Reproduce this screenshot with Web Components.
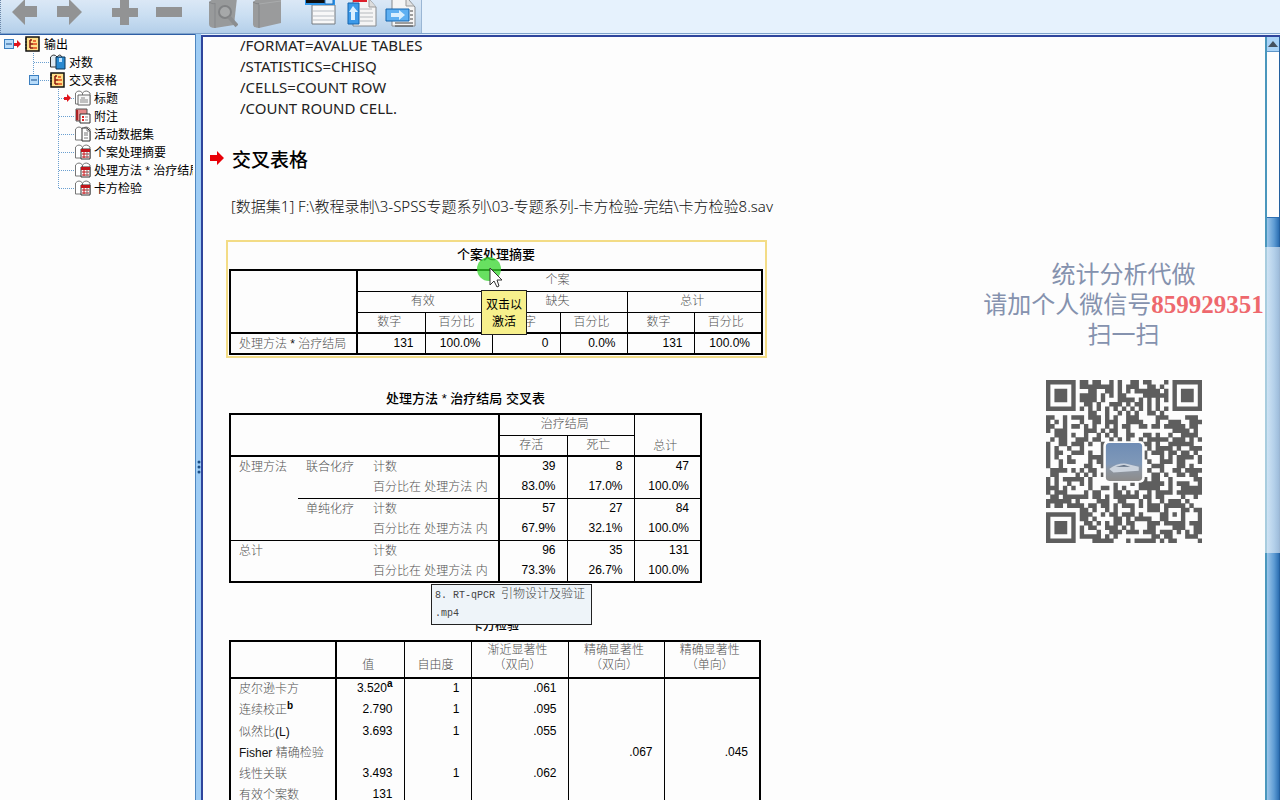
<!DOCTYPE html>
<html lang="zh-CN">
<head>
<meta charset="utf-8">
<title>输出查看器</title>
<style>
  html, body { height: 100%; margin: 0; }
  body { background: #fdfdfd; color: #000; font: 12px/18px "Liberation Sans", "Noto Sans CJK SC", sans-serif; overflow: hidden; }
</style>
</head>
<body>
<viewer-app></viewer-app>
<script>
const define = (name, html, setup) => {
  const template = document.createElement('template');
  template.innerHTML = html;
  customElements.define(name, class extends HTMLElement {
    connectedCallback() {
      if (this.shadowRoot) return;
      this.attachShadow({ mode: 'open' }).append(template.content.cloneNode(true));
      if (setup) setup.call(this, this.shadowRoot);
    }
  });
};

/* ---------- toolbar ---------- */
define('tool-button', `
<style>
  :host { display: block; }
  button { display: block; width: 32px; height: 34px; padding: 0; border: 0; background: none; }
  ::slotted(svg) { display: block; }
</style>
<button type="button"><slot></slot></button>`, function (root) {
  root.querySelector('button').setAttribute('aria-label', this.getAttribute('label'));
});

define('tool-bar', `
<style>
  :host { display: flex; background: #e6f2fd; height: 34px; box-sizing: border-box; border-bottom: 1px solid #7fa3cc; }
  .bar { display: flex; gap: 23px; padding: 0 4px 0 7px; background: linear-gradient(#dbe8f6, #cbdff2 45%, #b4cfe9); border-left: 1px dotted #6c87a8; border-right: 1px solid #9ab6d4; }
  .group { display: flex; gap: 12px; }
  .group.tight { gap: 8px; }
</style>
<div class="bar" role="toolbar">
  <div class="group">
    <tool-button label="后退"><svg width="32" height="34"><path d="M4 12 17-1V6H29V17H17V25Z" fill="#929394"/></svg></tool-button>
    <tool-button label="前进"><svg width="32" height="34"><path d="M30 12 17-1V6H5V17H17V25Z" fill="#929394"/></svg></tool-button>
  </div>
  <div class="group">
    <tool-button label="展开"><svg width="32" height="34"><path d="M13 0H22V8H31V17H22V25H13V17H5V8H13Z" fill="#929394"/></svg></tool-button>
    <tool-button label="折叠"><svg width="32" height="34"><path d="M5 7H31V17H5Z" fill="#929394"/></svg></tool-button>
  </div>
  <div class="group">
    <tool-button label="查找"><svg width="32" height="34"><path d="M3 2 8-2H31L28 25 9 28Q3 28 3 24Z" fill="#989a9b"/><path d="M3 2Q8 5 9 3V28" fill="none" stroke="#85878a"/><circle cx="19" cy="12" r="6" fill="#a6a8a9" stroke="#808284" stroke-width="2"/><path d="M23 17 31 26" stroke="#8b8d8f" stroke-width="4"/></svg></tool-button>
    <tool-button label="书籍"><svg width="32" height="34"><path d="M3 2 8-2H31V23L9 28Q3 28 3 24Z" fill="#9a9b9c"/><path d="M3 2Q8 5 9 3V28" fill="none" stroke="#838587"/><path d="M9 4 31 1" stroke="#a9abac"/></svg></tool-button>
  </div>
  <div class="group tight">
    <tool-button label="选择最后输出"><svg width="32" height="34"><path d="M7 5H30V24H7Z" fill="#f8f8f8" stroke="#747a80"/><path d="M8 11H29M8 16H29M8 20H29" stroke="#b8bec5"/><path d="M0-2H29V4H0Z" fill="#101010" stroke="#2b93e8" stroke-width="2"/><path d="M20-2H28V4H20Z" fill="#cbe7ff" stroke="#1a6fbd"/></svg></tool-button>
    <tool-button label="关联自动脚本"><svg width="32" height="34"><path d="M8-1H24L31 7V26H8Z" fill="#f5f5f5" stroke="#85898d"/><path d="M24-1V7H31" fill="#ddd" stroke="#999"/><path d="M8-1H22V2H8Z" fill="#dd202a"/><path d="M15 9H27M15 13H28M15 17H28M15 21H28" stroke="#b5b9bd"/><path d="M3 3H14V24H3Z" fill="#3d9ae9" stroke="#1464ae"/><path d="M8 6 13 12H10V20H6V12H4Z" fill="#d9efff"/></svg></tool-button>
    <tool-button label="导出"><svg width="32" height="34"><path d="M7-1H23L30 7V26H7Z" fill="#f5f5f5" stroke="#85898d"/><path d="M21-1V6H29" fill="#e2e2e2" stroke="#999"/><path d="M10 23H28M10 26H28M25 11H28M25 15H28M25 19H28" stroke="#444"/><path d="M1 9H24V21H1Z" fill="#5fb0f2" stroke="#1464ae"/><path d="M6 13H14V10L20 15 14 20V17H6Z" fill="#d9efff"/></svg></tool-button>
  </div>
</div>`);

/* ---------- outline tree ---------- */
const book = '<path d="M.5 14V3Q4-1 7.500 3 11-1 15 3V14Z" fill="#fff" stroke="#777"/><path d="M7.500 3V14" stroke="#777"/>';
const glyphs = {
  output: '<path d="M1 1H14V15H1Z" fill="#ffe08a" stroke="#111" stroke-width="1.500"/><path d="M0 3H2M0 6H2M0 9H2M0 12H2" stroke="#111"/><path d="M5 4V12M5 8H8M5 4H7M5 12H8" fill="none" stroke="#8b1a10" stroke-width="1.500"/><path d="M8 5H11M8 8H12M8 12H12" stroke="#e2481c" stroke-width="1.500"/>',
  log: '<path d="M.5 13V3Q4-1 7 3 10-1 12 3V13Z" fill="#dfeaf2" stroke="#333"/><path d="M6 3H15V15H6Z" fill="#2b8ad0" stroke="#0d3658"/><path d="M9 4H12V8H9Z" fill="#bfe4ff"/>',
  title: book + '<path d="M3 5H15V15H3Z" fill="#f8f8f8" stroke="#666"/><path d="M6 8H10M5 10H13M5 12H13" stroke="#888"/>',
  notes: '<path d="M1 1H12V13H1Z" fill="#e58a8a" stroke="#555"/><path d="M2 2V12" stroke="#a22" stroke-width="2"/><path d="M5 6H15V15H5Z" fill="#fff" stroke="#333"/><path d="M7 9H9M7 12H9" stroke="#d22" stroke-width="2"/><path d="M10 9H13M10 12H13" stroke="#888"/>',
  data: book + '<path d="M7 2H12L15 5V15H7Z" fill="#fff" stroke="#333"/><path d="M12 2V5H15M9 7H13M9 9H13M9 12H13" fill="none" stroke="#777"/>',
  table: book + '<path d="M6 5H15V15H6Z" fill="#fff" stroke="#333"/><path d="M6 5H15V8H6Z" fill="#c2161c"/><path d="M7 10H14M7 13H14M9 8V14" stroke="#c2161c"/><path d="M12 8V14" stroke="#777"/>'
};
const expander = x => `<rect x="${x}.5" y="4.500" width="9" height="9" fill="#b8dcfa" stroke="#3c7fc0"/><path d="M${x + 2} 9H${x + 8}" stroke="#174f8c"/>`;
const arrow = x => `<path d="M${x} 8H${x + 3}V5L${x + 7} 9 ${x + 3} 13V11H${x}Z" fill="#e0141c"/>`;
const dots = d => `<path d="${d}" fill="none" stroke="#6a9fd0" stroke-dasharray="1 1"/>`;

define('outline-item', `
<style>
  :host { display: block; height: 18px; white-space: nowrap; }
  a { display: flex; gap: 3px; color: inherit; text-decoration: none; line-height: 20px; height: 18px; }
  svg { flex: none; display: block; }
</style>
<a href="#"><svg height="18"></svg><span><slot></slot></span></a>`, function (root) {
  const level = +this.getAttribute('level'), last = this.hasAttribute('last');
  const x = [25, 50, 75][level];
  let art = '';
  if (level === 0) art = expander(4) + arrow(14);
  if (level === 1) art = dots(`M33.500 0V${last ? 9 : 18}M34 9.500H50`) + (last ? expander(29) : '');
  if (level === 2) art = dots(`M58.500 0V${last ? 9 : 18}M59 9.500H75`) + (this.hasAttribute('current') ? arrow(64) : '');
  const svg = root.querySelector('svg');
  svg.setAttribute('width', x + 16);
  svg.innerHTML = art + `<g transform="translate(${x} 1)">${glyphs[this.getAttribute('icon')]}</g>`;
});

define('outline-tree', `
<style>
  :host { display: block; overflow: hidden; background: #fdfdfd; padding-right: 2px; border-top: 1px solid #2f5fa5; box-sizing: border-box; }
  nav { overflow: hidden; }
</style>
<nav aria-label="大纲">
  <outline-item level="0" icon="output">输出</outline-item>
  <outline-item level="1" icon="log">对数</outline-item>
  <outline-item level="1" icon="output" last>交叉表格</outline-item>
  <outline-item level="2" icon="title" current>标题</outline-item>
  <outline-item level="2" icon="notes">附注</outline-item>
  <outline-item level="2" icon="data">活动数据集</outline-item>
  <outline-item level="2" icon="table">个案处理摘要</outline-item>
  <outline-item level="2" icon="table">处理方法 * 治疗结局</outline-item>
  <outline-item level="2" icon="table" last>卡方检验</outline-item>
</nav>`);

define('pane-splitter', `
<style>
  :host { display: flex; align-items: center; justify-content: center; background: #9fcdf5; border-left: 1px solid #4f87c0; box-sizing: border-box; padding-top: 100px; }
  svg { display: block; }
</style>
<svg width="4" height="14" fill="#1c4f86"><circle cx="2" cy="2" r="1.500"/><circle cx="2" cy="7" r="1.500"/><circle cx="2" cy="12" r="1.500"/></svg>`);

/* ---------- pivot tables ---------- */
const pivotStyle = `
<style>
  :host { display: block; width: max-content; }
  table { border-collapse: collapse; table-layout: fixed; border: 2px solid #000; }
  caption { font-size: 13px; font-weight: 500; line-height: 20px; padding-bottom: 4px; white-space: nowrap; }
  tr { height: 21px; }
  th, td { padding: 0 11px 0 8px; height: 20px; line-height: 18px; white-space: nowrap; box-sizing: border-box; vertical-align: top; }
  th { padding-top: 1px; font-weight: 300; color: #505050; text-align: left; }
  thead th { text-align: center; padding: 0 4px 0 0; border: 1px solid #000; }
  thead { border-bottom: 2px solid #000; }
  .stub { border-right: 2px solid #000; }
  thead .stub { border-right: 2px solid #000; }
  thead .low { vertical-align: bottom; }
  td { text-align: right; border-left: 1px solid #000; border-right: 1px solid #000; }
  td.stub + td, th.stub + td { border-left: 2px solid #000; }
  sup { font-size: 10px; line-height: 0; vertical-align: 5px; color: #000; font-weight: 700; }
  i { font-style: normal; font-weight: 400; color: #111; }
  .rule > * { border-top: 1px solid #000; }
</style>`;

define('case-summary', pivotStyle + `
<style>table { width: 534px; } caption { padding-top: 2px; }</style>
<table>
  <caption>个案处理摘要</caption>
  <colgroup><col style="width:127px"><col style="width:68px"><col style="width:67px"><col style="width:68px"><col style="width:67px"><col style="width:67px"><col style="width:68px"></colgroup>
  <thead>
    <tr><th class="stub" rowspan="3"></th><th colspan="6">个案</th></tr>
    <tr><th colspan="2">有效</th><th colspan="2">缺失</th><th colspan="2">总计</th></tr>
    <tr><th>数字</th><th>百分比</th><th>数字</th><th>百分比</th><th>数字</th><th>百分比</th></tr>
  </thead>
  <tbody><tr><th class="stub">处理方法 <i>*</i> 治疗结局</th><td>131</td><td>100.0%</td><td>0</td><td>0.0%</td><td>131</td><td>100.0%</td></tr></tbody>
</table>`);

define('cross-table', pivotStyle + `
<style>table { width: 473px; }</style>
<table>
  <caption>处理方法 * 治疗结局 交叉表</caption>
  <colgroup><col style="width:68px"><col style="width:67px"><col style="width:134px"><col style="width:68px"><col style="width:67px"><col style="width:67px"></colgroup>
  <thead>
    <tr><th class="stub" colspan="3" rowspan="2"></th><th colspan="2">治疗结局</th><th class="low" rowspan="2">总计</th></tr>
    <tr><th>存活</th><th>死亡</th></tr>
  </thead>
  <tbody>
    <tr><th rowspan="4">处理方法</th><th rowspan="2">联合化疗</th><th class="stub">计数</th><td>39</td><td>8</td><td>47</td></tr>
    <tr><th class="stub">百分比在 处理方法 内</th><td>83.0%</td><td>17.0%</td><td>100.0%</td></tr>
    <tr class="rule"><th rowspan="2">单纯化疗</th><th class="stub">计数</th><td>57</td><td>27</td><td>84</td></tr>
    <tr><th class="stub">百分比在 处理方法 内</th><td>67.9%</td><td>32.1%</td><td>100.0%</td></tr>
    <tr class="rule"><th rowspan="2">总计</th><th rowspan="2"></th><th class="stub">计数</th><td>96</td><td>35</td><td>131</td></tr>
    <tr><th class="stub">百分比在 处理方法 内</th><td>73.3%</td><td>26.7%</td><td>100.0%</td></tr>
  </tbody>
</table>`);

define('chi-square-tests', pivotStyle + `
<style>table { width: 532px; } caption { font-size: 12px; } thead tr { height: 37px; } thead th { line-height: 15px; padding-bottom: 4px; } .tall { height: 22px; }</style>
<table>
  <caption>卡方检验</caption>
  <colgroup><col style="width:106px"><col style="width:68px"><col style="width:67px"><col style="width:97px"><col style="width:96px"><col style="width:96px"></colgroup>
  <thead><tr><th class="stub"></th><th class="low">值</th><th class="low">自由度</th><th class="low">渐近显著性<br>（双向）</th><th class="low">精确显著性<br>（双向）</th><th class="low">精确显著性<br>（单向）</th></tr></thead>
  <tbody>
    <tr class="tall"><th class="stub">皮尔逊卡方</th><td>3.520<sup>a</sup></td><td>1</td><td>.061</td><td></td><td></td></tr>
    <tr class="tall"><th class="stub">连续校正<sup>b</sup></th><td>2.790</td><td>1</td><td>.095</td><td></td><td></td></tr>
    <tr><th class="stub">似然比<i>(L)</i></th><td>3.693</td><td>1</td><td>.055</td><td></td><td></td></tr>
    <tr><th class="stub"><i>Fisher</i> 精确检验</th><td></td><td></td><td></td><td>.067</td><td>.045</td></tr>
    <tr><th class="stub">线性关联</th><td>3.493</td><td>1</td><td>.062</td><td></td><td></td></tr>
    <tr><th class="stub">有效个案数</th><td>131</td><td></td><td></td><td></td><td></td></tr>
  </tbody>
</table>`);

/* ---------- output document ---------- */
define('hint-tip', `
<style>
  :host { display: block; box-sizing: border-box; border: 1px solid #222; background: #f7f08c; text-align: center; line-height: 17px; padding: 6px 4px 3px; }
</style><slot></slot>`);

define('output-document', `
<style>
  :host { display: block; position: relative; overflow: hidden; background: #fdfdfd; }
  .syntax { margin-top: -2px; padding-left: 37px; font: 15px/21px "Noto Sans", sans-serif; color: #222; }
  .head { display: flex; gap: 8px; margin-top: 29px; padding-left: 7px; align-items: center; height: 26px; }
  .head svg { display: block; margin-bottom: 6px; }
  h1 { margin: 0; font-size: 19px; line-height: 26px; font-weight: 500; }
  .source { margin: 22px 0 0; padding-left: 28px; font: 15px/21px "Noto Sans", "Noto Sans CJK SC", sans-serif; font-weight: 300; color: #111; white-space: nowrap; }
  .selected { display: block; width: max-content; margin: 23px 0 0 23px; padding: 1px 2px 1px 1px; border: 2px solid #f3dc86; }
  cross-table { margin: 31px 0 0 26px; }
  chi-square-tests { margin: 33px 0 0 26px; }
  .pointer { position: absolute; left: 274px; top: 219px; }
  .tip { position: absolute; left: 278px; top: 253px; width: 46px; }
  .file { position: absolute; left: 228px; top: 547px; width: 161px; background: #eef4f9; text-align: left; padding: 1px 3px; line-height: 18px; color: #444; font-family: "Liberation Mono", "Noto Sans CJK SC", monospace; font-size: 10px; font-weight: 300; white-space: nowrap; }
  .file b { font-size: 12px; font-weight: 300; }
</style>
<div class="syntax">/FORMAT=AVALUE TABLES<br>/STATISTICS=CHISQ<br>/CELLS=COUNT ROW<br>/COUNT ROUND CELL.</div>
<div class="head"><svg width="14" height="14"><path d="M0 4H7V0L14 7 7 14V10H0Z" fill="#e80008"/></svg><h1>交叉表格</h1></div>
<p class="source">[数据集1] F:\\教程录制\\3-SPSS专题系列\\03-专题系列-卡方检验-完结\\卡方检验8.sav</p>
<div class="selected"><case-summary></case-summary></div>
<cross-table></cross-table>
<chi-square-tests></chi-square-tests>
<svg class="pointer" width="28" height="34"><circle cx="12" cy="13" r="12" fill="#35d62c" fill-opacity=".75"/><path d="M13 12V29L17 25 20 31 22 30 20 24H25Z" fill="#fff" stroke="#333"/></svg>
<hint-tip class="tip">双击以<br>激活</hint-tip>
<hint-tip class="file">8. RT-qPCR <b>引物设计及验证</b><br>.mp4</hint-tip>`);

define('scroll-bar', `
<style>
  :host { display: flex; flex-direction: column; background: #fdfdfd; border-left: 2px solid #4a97bd; border-right: 1px solid #24609f; box-sizing: border-box; }
  button { display: block; padding: 0; border: 0; height: 15px; background: #a9d3f7; border-bottom: 1px solid #5d95c8; }
  svg { display: block; margin: 0 auto; }
  .track { flex: 1; display: grid; grid-template-rows: 22fr 78fr; }
  .thumb { background: linear-gradient(90deg, #9cc6ea, #5d9bd3 60%, #2c6fb3); border-top: 1px solid #2c6fb3; }
</style>
<button type="button" aria-label="向上滚动"><svg width="10" height="6"><path d="M5 0 10 6H0Z" fill="#44515f"/></svg></button>
<div class="track"><span></span><div class="thumb"></div></div>`);

/* ---------- contact panel ---------- */
define('qr-code', `
<style>:host { display: block; width: 156px; height: 163px; } svg { display: block; width: 100%; height: 100%; }</style>
<svg viewBox="0 0 37 37" preserveAspectRatio="none">
  <defs><linearGradient id="sky" x2="0" y2="1"><stop offset="0" stop-color="#6f8db5"/><stop offset=".55" stop-color="#7f98b8"/><stop offset=".7" stop-color="#8d96a2"/><stop offset="1" stop-color="#8d8c8b"/></linearGradient></defs>
  <path class="bits" fill="#5e5e5e"/>
  <rect x="13.600" y="13.900" width="9.800" height="9.400" rx="1" fill="#fdfdfd"/>
  <rect x="14.200" y="14.300" width="8.600" height="8.600" rx=".8" fill="url(#sky)"/>
  <path d="M15 20.200Q17 18.800 19 19L22 19.700V20.600L16 21Z" fill="#cbd3dd"/><path d="M16.500 19.700 18.500 19.300 20 19.700Z" fill="#59687c"/>
</svg>`, function (root) {
  const n = 37;
  let state = 859929351, d = '';
  const random = () => (state = (state * 1103515245 + 12345) % 2147483648) / 2147483648;
  const ringOf = (x, y, cx, cy) => Math.max(Math.abs(x - cx), Math.abs(y - cy));
  for (let y = 0; y < n; y++) for (let x = 0; x < n; x++) {
    let on = random() < 0.52;
    for (const [cx, cy] of [[3, 3], [33, 3], [3, 33]]) {
      const ring = ringOf(x, y, cx, cy);
      if (ring <= 4) on = ring < 2 || ring === 3;
    }
    const align = ringOf(x, y, 30, 30);
    if (align <= 2) on = align !== 1;
    if ((y === 6 && x > 7 && x < 29) || (x === 6 && y > 7 && y < 29)) on = (x + y) % 2 === 0;
    if (on) d += `M${x} ${y}h1.040v1.040h-1.040z`;
  }
  root.querySelector('.bits').setAttribute('d', d);
});

define('contact-panel', `
<style>
  :host { display: flex; flex-direction: column; align-items: center; box-sizing: border-box; padding: 13px 0 10px; background: linear-gradient(90deg, #fdfdfd00, #fdfdfd8c); pointer-events: none; }
  p { margin: 0; text-align: center; font-size: 24px; line-height: 30px; color: #8592ae; white-space: nowrap; }
  b { font: 700 25px/30px "Liberation Serif", serif; color: #ee686d; }
  qr-code { margin-top: 30px; }
</style>
<p>统计分析代做<br>请加个人微信号<b>859929351</b><br>扫一扫</p>
<qr-code></qr-code>`);

define('viewer-app', `
<style>
  :host { display: flex; flex-direction: column; height: 100vh; position: relative; background: #e6f2fd; }
  main { flex: 1; min-height: 0; display: grid; grid-template-columns: 195px 6px minmax(0, 1fr); }
  .pane { display: grid; grid-template-columns: minmax(0, 1fr) 15px; min-height: 0; margin-top: 1px; border: solid #2f459c; border-width: 2px 0 0 2px; }
  outline-tree, pane-splitter { min-height: 0; }
  contact-panel { position: absolute; right: 0; top: 247px; width: 313px; height: 306px; }
</style>
<tool-bar></tool-bar>
<main>
  <outline-tree></outline-tree>
  <pane-splitter></pane-splitter>
  <section class="pane"><output-document></output-document><scroll-bar></scroll-bar></section>
</main>
<contact-panel></contact-panel>`);
</script>
</body>
</html>
